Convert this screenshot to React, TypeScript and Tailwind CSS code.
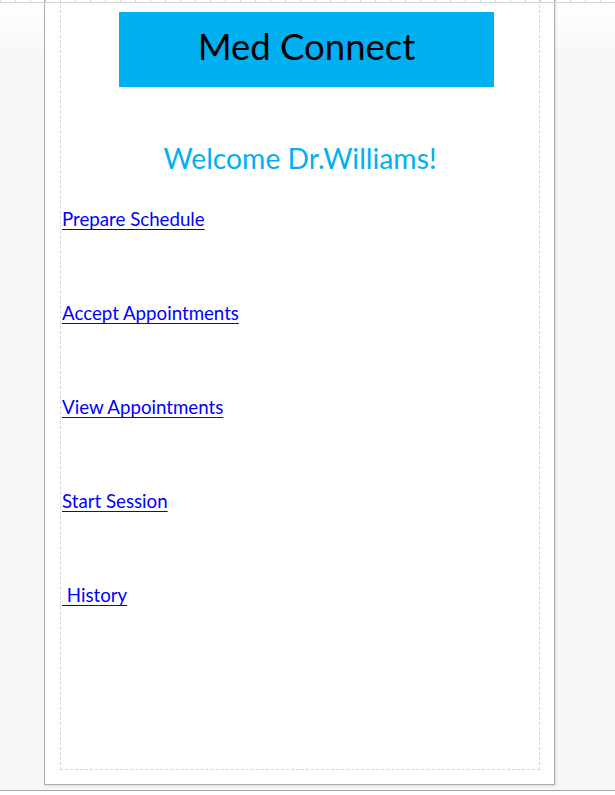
import React from "react";

const links = ["Prepare Schedule", "Accept Appointments", "View Appointments", "Start Session", "\u00a0History"];

export default function App() {
  return (
    <div className="relative w-[615px] h-[795px] overflow-hidden bg-[linear-gradient(180deg,#ffffff_0px,#f7f7f7_60px,#f7f7f7_100%)] flex flex-col" style={{ fontFamily: "Lato, 'Open Sans', sans-serif" }}>
      <div className="ml-[44px] w-[511px] h-[785px] shrink-0 bg-white border-x border-b border-[#a9b0ba] shadow-[1px_1px_2px_rgba(0,0,0,0.12)] pl-[15px] pr-[14px] pb-[14px]">
        <div className="h-full border-x border-b border-dashed border-[#d6d6d6] flex flex-col">
          <div className="mt-[12px] ml-[58px] w-[375px] h-[75px] bg-[#00b0f0] pt-[16px] text-center text-[36.5px] leading-none text-black">
            Med Connect
          </div>
          <div className="mt-[57px] text-center text-[28.3px] leading-none text-[#00b0f0]">Welcome Dr.Williams!</div>
          <div className="mt-[38px] pl-[1px] flex flex-col gap-[75.3px]">
            {links.map((l) => (
              <a key={l} href="#" className="self-start text-[18.7px] leading-none text-[#0000ff] underline underline-offset-[3px] decoration-1 whitespace-pre">
                {l}
              </a>
            ))}
          </div>
        </div>
      </div>
      <div className="mt-[5px] h-[1px] w-full bg-[#a6a6a6] shrink-0" />
      <div className="flex-1 bg-white" />
      <div className="absolute top-0 left-0 right-0 h-[3px] border-b border-[#d4d4d4] bg-[repeating-linear-gradient(90deg,#d4d4d4_0_1px,transparent_1px_15px)]" />
    </div>
  );
}
